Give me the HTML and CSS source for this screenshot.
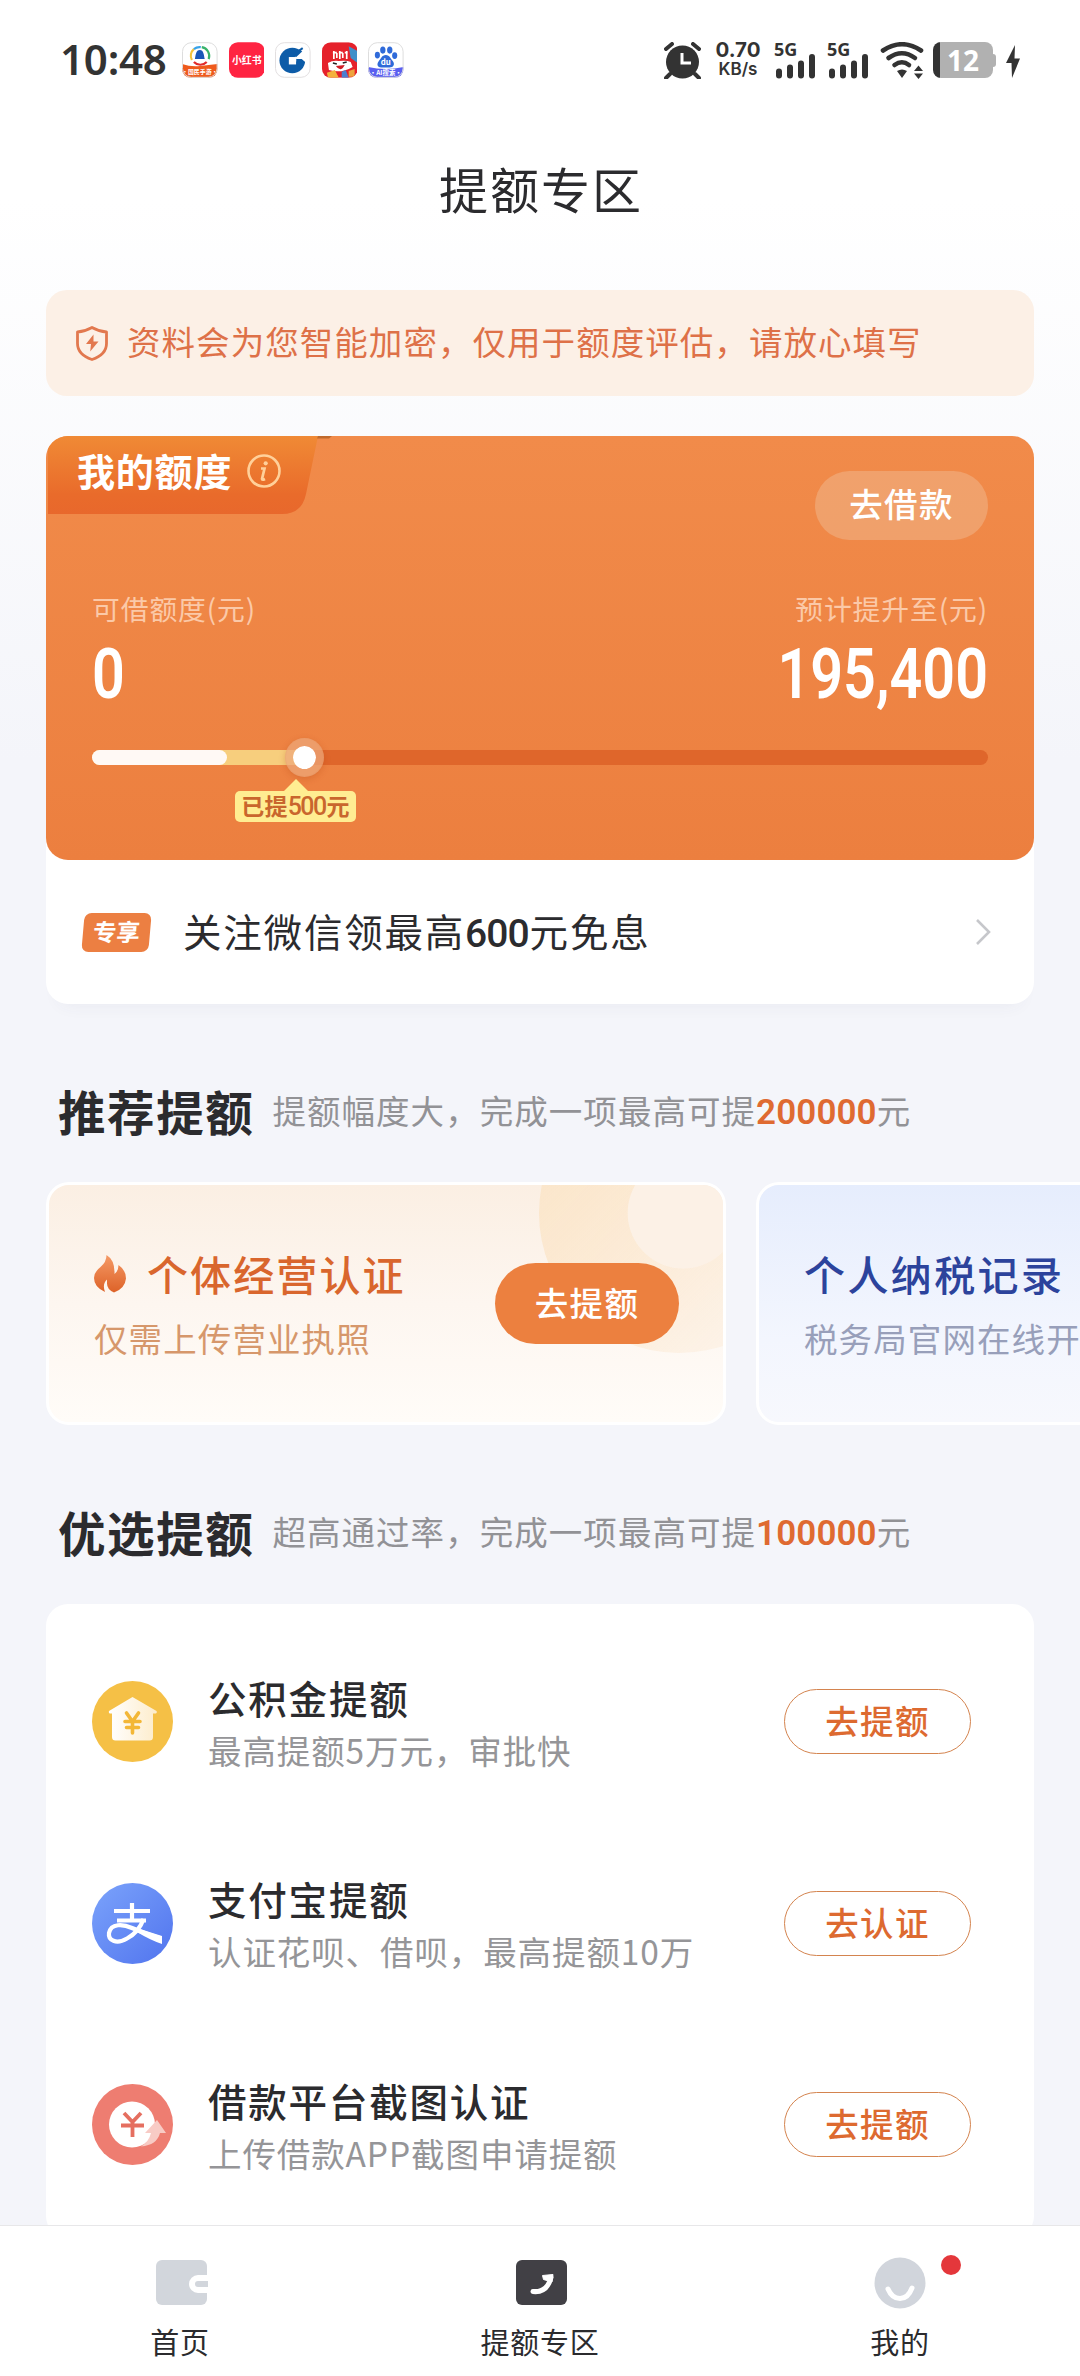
FILE: index.html
```html
<!DOCTYPE html>
<html lang="zh-CN">
<head>
<meta charset="utf-8">
<title>提额专区</title>
<link rel="stylesheet" href="styles.css">
</head>
<body>
<div class="screen">
  <header class="status">
    <span class="clock">10:48</span>
    <div class="apps">
      <svg viewBox="0 0 36 36"><defs><clipPath id="r"><rect width="36" height="36" rx="9"/></clipPath></defs><g clip-path="url(#r)"><rect width="36" height="36" fill="#fff"/><path d="M0 22q9 3 18 2t18-2v14H0z" fill="#ef5a1c"/><g fill="none" stroke-width="2.2"><path d="M10 18a9 9 0 0 1 2-11" stroke="#f5c33a"/><path d="M12 7a9 9 0 0 1 7-2" stroke="#3aa3e8"/><path d="M20 5a9 9 0 0 1 7 12" stroke="#39b36b"/><path d="M12 20a9 9 0 0 0 13 0" stroke="#e22c2c"/></g><path d="M18 8c4 0 4 5 5 9h-10c1-4 1-9 5-9z" fill="#1b57b8"/><text x="18" y="32" class="micro" font-size="6">·国民手游·</text></g><rect x=".5" y=".5" width="35" height="35" rx="9" fill="none" stroke="#ddd"/></svg>
      <svg viewBox="0 0 36 36"><rect width="36" height="36" rx="9" fill="#ff2442"/><text x="18" y="22" class="micro" font-size="10">小红书</text></svg>
      <svg viewBox="0 0 36 36"><rect x=".5" y=".5" width="35" height="35" rx="9" fill="#fff" stroke="#e2dfe0"/><circle cx="17.500" cy="18.500" r="13" fill="#0d5ca8"/><rect x="14" y="15" width="7.500" height="7.500" fill="#fff"/><path d="M20 14l9-8 5 5v12l-7-6-5.500 0z" fill="#fff"/><path d="M18 14l7-6.500 2.500 2L21.500 15z" fill="#0d5ca8"/><path d="M21.500 19.500h8l-5 6-3-3z" fill="#0d5ca8"/><path d="M19 12.500l9-6.500" stroke="#0d5ca8" stroke-width="2"/></svg>
      <svg viewBox="0 0 36 36"><g clip-path="url(#r)"><rect width="36" height="36" fill="#e5212b"/><path d="M27 4l9 5v12l-7-5z" fill="#3f8fc9"/><path d="M11 10.500h4M17 10.500h4M23 10.500h3M12 9v8M15 11v5M18 9v8M21 11v5M25 9v8" stroke="#fff" stroke-width="1.700"/><path d="M6 21q5-3 11-2 8-1 12 1l2 5q-12 7-24 3z" fill="#fff"/><path d="M14 24q5 7 9-1z" fill="#cf1c25"/><path d="M11 21l4 1M21 21l4-1" stroke="#222" stroke-width="1.500"/><path d="M5 31l8-3 4 8H6z" fill="#f4b13d"/><path d="M20 30l4-2 3 8h-7z" fill="#4b7fd0"/><path d="M27 29l6-2v8h-6z" fill="#eda43e"/></g></svg>
      <svg viewBox="0 0 36 36"><g clip-path="url(#r)"><rect width="36" height="36" fill="#fff"/><path d="M0 25q18 4 36 0v11H0z" fill="#5a5ff0"/></g><rect x=".5" y=".5" width="35" height="35" rx="9" fill="none" stroke="#ddd"/><g fill="#2f6ad9"><ellipse cx="9.500" cy="13" rx="2.600" ry="3.400"/><ellipse cx="15" cy="8" rx="2.700" ry="3.600"/><ellipse cx="22" cy="8" rx="2.700" ry="3.600"/><ellipse cx="27" cy="13.500" rx="2.600" ry="3.400"/><path d="M18 13c4 0 5 4 7 6 3 4 0 7-4 6.500h-7c-4 .5-6-3-3-6.500 2-2 3-6 7-6z"/></g><text x="18" y="23.500" class="micro" font-size="8">du</text><text x="18" y="33" class="micro" font-size="6.500">·AI搜索·</text></svg>
    </div>
    <svg class="alarm" viewBox="0 0 37 37"><path d="M2 7l6-5M35 7l-6-5M6 32l-4 4M31 32l4 4" stroke="#333" stroke-width="4" stroke-linecap="round"/><circle cx="18.500" cy="20" r="16.500" fill="#333"/><path d="M18 11v10h9" fill="none" stroke="#fff" stroke-width="3"/></svg>
    <div class="speed"><b>0.70</b><i>KB/s</i></div>
    <div class="signal"><span>5G</span><svg viewBox="0 0 42 26"><path d="M5 18.500v4M16 14.500v8M27 10.500v12M38 4v18.500" /></svg></div>
    <div class="signal"><span>5G</span><svg viewBox="0 0 42 26"><path d="M5 18.500v4M16 14.500v8M27 10.500v12M38 4v18.500" /></svg></div>
    <svg class="wifi" viewBox="0 0 44 37"><g fill="none" stroke="#333" stroke-width="4.600" stroke-linecap="round"><path d="M3 8.500Q22 -4 41 8.500"/><path d="M8.500 16Q22 6.500 35 16"/><path d="M14.500 23Q22 17.500 29 23"/></g><path d="M17 29q5-3 10 0l-5 7zM34 29l4.500-5.500 4.500 5.500zM34 31.500h9L38.500 37z" fill="#333"/></svg>
    <div class="battery"><span>12</span></div>
    <svg class="bolt" viewBox="0 0 14 33"><path d="M9 0L0 18h5.500L6 33l8-19.500H8.500z" fill="#333"/></svg>
  </header>

  <h1 class="title">提额专区</h1>

  <main class="content">
    <div class="notice">
      <svg viewBox="0 0 32 35"><path d="M16 1.500Q23 5.500 30.500 6v11.500Q30.500 28.500 16 33.500 1.500 28.500 1.500 17.500V6Q9 5.500 16 1.500z" fill="none" stroke="#e2784e" stroke-width="2.800" stroke-linejoin="round"/><path d="M17.500 8.500l-7.500 9.500h5l-.8 7.500L22.500 15.500h-5z" fill="#e2784e"/></svg>
      <span>资料会为您智能加密，仅用于额度评估，请放心填写</span>
    </div>

    <section class="quota">
      <div class="quota-card">
        <div class="quota-tab">
          <svg class="tab-bg" viewBox="0 0 290 78"><defs><linearGradient id="tg" x2="0" y2="1"><stop offset="0" stop-color="#f08a35"/><stop offset=".75" stop-color="#e96b2b"/><stop offset="1" stop-color="#e8682c"/></linearGradient></defs><path d="M0 0H272L260 58Q256 78 236 78H2V0z" fill="url(#tg)"/><path d="M272 0h14l-3 2.500h-12z" fill="#c06a2c"/></svg>
          <span>我的额度</span>
          <svg class="info" viewBox="0 0 34 34"><circle cx="17" cy="17" r="15.500" fill="none" stroke="#ffd09a" stroke-width="2.600"/><circle cx="18.700" cy="9.300" r="2.100" fill="#ffd09a"/><path d="M14 14.500h3.500l-2.500 10.500q0 1.500 3 0" fill="none" stroke="#ffd09a" stroke-width="2.700"/></svg>
        </div>
        <a class="loan">去借款</a>
        <div class="amounts">
          <div><p>可借额度(元)</p><b>0</b></div>
          <div class="right"><p>预计提升至(元)</p><b>195,400</b></div>
        </div>
        <div class="track"><div class="gain"></div><div class="base"></div><div class="knob"></div><div class="tip">已提<span>500</span>元</div></div>
      </div>
      <div class="follow">
        <span class="tag">专享</span>
        <span class="follow-text">关注微信领最高<span class="num">600</span>元免息</span>
        <svg viewBox="0 0 16 28"><path d="M2 2l12 12L2 26" fill="none" stroke="#c6c7cb" stroke-width="2.600"/></svg>
      </div>
    </section>

    <div class="heading"><h2>推荐提额</h2><p>提额幅度大，完成一项最高可提<b>200000</b>元</p></div>
    <div class="offers">
      <article class="offer warm">
        <div>
          <h3><svg viewBox="0 0 32 38"><defs><linearGradient id="fg" x2="0" y2="1"><stop offset="0" stop-color="#f59a66"/><stop offset="1" stop-color="#dd6228"/></linearGradient></defs><path d="M12.500 0Q21 5 20.500 19 24.500 16 24.500 10 32 15 32 23.500 31 33.500 20 37.500 13 34.500 13 28.500V24.500Q8 29 11 37 0 32 0 23 0 17 6.500 12 12.500 7 12.500 0z" fill="url(#fg)"/></svg>个体经营认证</h3>
          <p>仅需上传营业执照</p>
        </div>
        <a>去提额</a>
      </article>
      <article class="offer cool">
        <div><h3>个人纳税记录</h3><p>税务局官网在线开</p></div>
      </article>
    </div>

    <div class="heading second"><h2>优选提额</h2><p>超高通过率，完成一项最高可提<b>100000</b>元</p></div>
    <ul class="list">
      <li>
        <svg viewBox="0 0 81 81"><defs><linearGradient id="hg"><stop offset="0" stop-color="#fff"/><stop offset="1" stop-color="#fdeccb"/></linearGradient></defs><circle cx="40.500" cy="40.500" r="40.500" fill="#f5c046"/><path d="M40.500 16L17 30q-1 3 3 2.500V56q0 3.500 3.500 3.500h34Q61 59.500 61 56V32.500q5 .5 3.500-2.500z" fill="url(#hg)"/><path d="M34.500 32l6 8.500 6-8.500M33 40.500h15M34.500 46.500h12M40.500 40.500V52" fill="none" stroke="#f3b737" stroke-width="3.600" stroke-linecap="round"/></svg>
        <div><h4>公积金提额</h4><p>最高提额5万元，审批快</p></div>
        <a>去提额</a>
      </li>
      <li>
        <svg viewBox="0 0 81 81"><defs><linearGradient id="bg" x2="1" y2="1"><stop offset="0" stop-color="#7ba3fb"/><stop offset="1" stop-color="#5174ee"/></linearGradient></defs><circle cx="40.500" cy="40.500" r="40.500" fill="url(#bg)"/><path d="M22 28h36M40 20v18M25 37.500h29" fill="none" stroke="#fff" stroke-width="4.200"/><path d="M51.500 36Q47 49 35 55.500C24 62 16 57 17 50 19 40 31 41 40 45Q54 51 69 55.500" fill="none" stroke="#fff" stroke-width="4.200"/><path d="M48 46l22 7v8Q58 57 45 49z" fill="#fff"/></svg>
        <div><h4>支付宝提额</h4><p>认证花呗、借呗，最高提额10万</p></div>
        <a>去认证</a>
      </li>
      <li>
        <svg viewBox="0 0 81 81"><circle cx="40.500" cy="40.500" r="40.500" fill="#ee7d71"/><circle cx="40" cy="40.500" r="23" fill="#fff"/><path d="M32 29l8.500 9 8.500-9M29 41.500h23M40.500 38v15" fill="none" stroke="#e56f60" stroke-width="3.800"/><path d="M65 36l9 13h-6Q65 61 49 62.500q8-5 10-13.500h-6z" fill="#f8cbc5"/></svg>
        <div><h4>借款平台截图认证</h4><p>上传借款APP截图申请提额</p></div>
        <a>去提额</a>
      </li>
    </ul>
  </main>

  <nav class="tabs">
    <a><svg viewBox="-2 0 52 52"><rect x="0" y="3" width="51" height="45" rx="6" fill="#d2d6dc"/><path d="M52 27H43" stroke="#d2d6dc" stroke-width="6"/><path d="M52 21H42a6 6 0 0 0 0 12h10" fill="none" stroke="#fff" stroke-width="6"/></svg>首页</a>
    <a><svg viewBox="-2 0 52 52"><rect x="0" y="3" width="51" height="45" rx="6" fill="#414045"/><path d="M17 34.500Q31 36 35 20.500" fill="none" stroke="#fff" stroke-width="5" stroke-linecap="round"/><path d="M26.500 18.500L37 17.500 36 25 27.500 22.500z" fill="#fff" stroke="#fff" stroke-linejoin="round"/></svg>提额专区</a>
    <a class="me"><svg viewBox="0 0 52 52"><circle cx="26" cy="26" r="25.500" fill="#d1d5dc"/><path d="M14 32q4 9.500 12 9.500T38 31" fill="none" stroke="#fff" stroke-width="5" stroke-linecap="round"/></svg>我的</a>
  </nav>
</div>
</body>
</html>
```
FILE: styles.css
```css
* { box-sizing: border-box; margin: 0; padding: 0; }
body {
  width: 1080px; height: 2376px; overflow: hidden;
  font-family: "Noto Sans CJK SC", sans-serif;
  color: #2b2b2e; background: #f4f5fa;
}
svg { display: block; flex: none; }
.screen {
  height: 2376px; display: flex; flex-direction: column; overflow: hidden;
  background: linear-gradient(#fff 200px, #f4f5fa 760px);
}

.status { height: 120px; flex: none; display: flex; align-items: center; padding-left: 60px; color: #333; font-family: "Noto Sans", sans-serif; }
.clock { width: 122px; font-size: 42px; font-weight: 600; line-height: 60px; letter-spacing: -.2px; white-space: nowrap; margin-top: -2px; }
.apps { display: flex; gap: 11px; margin-right: auto; }
.apps svg { width: 35.600px; height: 36px; }
.micro { fill: #fff; text-anchor: middle; font-family: "Noto Sans CJK SC", sans-serif; font-weight: 700; }
.alarm { width: 37px; height: 37px; margin-right: 14px; }
.speed { width: 46px; display: flex; flex-direction: column; align-items: center; margin-right: 13px; font-family: Inter, sans-serif; }
.speed b { font-size: 20.500px; font-weight: 700; line-height: 21px; margin-top: -3px; }
.speed i { font-size: 17px; font-style: normal; font-weight: 600; line-height: 19px; }
.signal { position: relative; width: 42px; height: 37px; display: flex; align-items: flex-end; margin-right: 11px; }
.signal span { position: absolute; top: -3px; left: 0; font-size: 18px; font-weight: 700; line-height: 20px; }
.signal svg { width: 42px; height: 26px; fill: none; stroke: #333; stroke-width: 6; stroke-linecap: round; }
.wifi { width: 44px; height: 37px; margin: 0 9px 0 0; }
.battery { position: relative; width: 60px; height: 36px; border-radius: 8px; background: linear-gradient(90deg, #333 7px, #b1b1b1 7px); display: flex; align-items: center; justify-content: center; color: #fff; font-size: 28px; font-weight: 700; line-height: 36px; margin-right: 13px; }
.battery::after { content: ""; position: absolute; right: -3px; top: 12px; width: 3px; height: 13px; background: #b1b1b1; border-radius: 0 3px 3px 0; }
.bolt { width: 14px; height: 33px; margin: 3px 60px 0 0; }

.title { flex: none; height: 170px; font-size: 49px; font-weight: 400; letter-spacing: 2px; line-height: 136px; text-align: center; padding-left: 2px; }
.content { flex: 1; min-height: 0; overflow: hidden; display: flex; flex-direction: column; padding-left: 46px; }

.notice { flex: none; width: 988px; height: 106px; border-radius: 21px; background: #fcf0e6; display: flex; align-items: center; gap: 19px; padding-left: 30px; color: #de7148; font-size: 33.500px; letter-spacing: 1.050px; }
.notice svg { width: 32px; height: 35px; }
.notice span { line-height: 40px; margin-top: -5px; }

.quota { flex: none; width: 988px; margin-top: 40px; border-radius: 22px; background: #fff; box-shadow: 0 14px 18px -14px rgba(70, 70, 100, .07); }
.quota-card { position: relative; height: 424px; border-radius: 22px; background: linear-gradient(#f18b4a, #ec7f3f); overflow: hidden; color: #fff; }
.quota-tab { position: relative; width: 290px; height: 78px; display: flex; align-items: center; padding: 0 0 8px 31px; gap: 15px; font-size: 38px; font-weight: 700; letter-spacing: .8px; }
.quota-tab span { position: relative; line-height: 60px; margin-top: -2px; }
.tab-bg { position: absolute; left: 0; top: 0; width: 290px; height: 78px; }
.info { position: relative; width: 34px; height: 34px; }
.loan { position: absolute; right: 46px; top: 35px; width: 173px; height: 69px; border-radius: 35px; background: rgba(241, 180, 136, .55); text-align: center; font-size: 33.500px; font-weight: 500; letter-spacing: 1.300px; line-height: 64px; }
.amounts { display: flex; justify-content: space-between; padding: 74px 46px 0 46px; }
.amounts p { font-size: 27.800px; line-height: 40px; letter-spacing: .9px; color: #fbc9a8; }
.amounts b { display: block; font-family: Roboto, sans-serif; font-size: 71px; font-weight: 600; line-height: 84px; transform: translateY(4px) scaleX(.81); transform-origin: 0 50%; }
.amounts .right { text-align: right; }
.amounts .right b { transform-origin: 100% 50%; }
.track { position: relative; width: 896px; height: 15px; margin: 38px 46px 0; border-radius: 8px; background: #df662b; }
.gain { position: absolute; left: 0; top: 0; width: 212px; height: 15px; border-radius: 8px 0 0 8px; background: #f7ce7d; }
.base { position: absolute; left: 0; top: 0; width: 135px; height: 15px; border-radius: 8px; background: #fff9f5; }
.knob { position: absolute; left: 193px; top: -12px; width: 39px; height: 39px; border: 8px solid rgba(237, 167, 122, .72); border-radius: 50%; background: #fff; background-clip: padding-box; box-shadow: 0 2px 6px rgba(170, 60, 10, .25); }
.tip { position: absolute; left: 143px; top: 41px; width: 121px; height: 31px; border-radius: 5px; background: #ffed92; color: #c9662d; font-size: 23px; font-weight: 700; line-height: 29px; text-align: center; letter-spacing: .2px; white-space: nowrap; }
.tip span { font-family: Roboto, sans-serif; font-size: 25px; font-weight: 500; letter-spacing: -1.600px; margin-right: 1px; }
.tip::before { content: ""; position: absolute; left: 49px; top: -12px; border: 12px solid transparent; border-top: 0; border-bottom-color: #ffed92; }

.follow { height: 144px; display: flex; align-items: center; padding: 0 43px 0 37px; font-size: 38.500px; }
.tag { width: 67px; height: 39px; border-radius: 7px; background: #ec7f42; color: #fff; font-size: 23.500px; font-weight: 700; line-height: 36px; text-align: center; transform: skewX(-5deg); }
.follow-text { flex: 1; margin-left: 33px; margin-top: -1px; letter-spacing: 1.800px; line-height: 60px; }
.num { font-family: Roboto, sans-serif; font-size: 39px; font-weight: 500; letter-spacing: -1px; margin-right: 1px; }
.follow svg { width: 16px; height: 28px; }

.heading { flex: none; height: 178px; display: flex; align-items: center; padding: 36px 0 0 12px; }
.heading h2 { font-size: 47.500px; font-weight: 700; letter-spacing: 1.600px; line-height: 70px; margin: -1px 18px 0 0; }
.heading p { font-size: 33.500px; letter-spacing: 1.050px; line-height: 60px; color: #929296; white-space: nowrap; }
.heading b { font-family: Roboto, sans-serif; font-size: 35px; font-weight: 600; letter-spacing: .1px; color: #df6a31; }
.heading.second { height: 179px; }

.offers { flex: none; display: flex; gap: 30px; }
.offer { position: relative; flex: none; width: 680px; height: 243px; border: 3px solid #fff; border-radius: 23px; overflow: hidden; padding: 58px 44px 0 45px; display: flex; justify-content: space-between; }
.offer h3 { display: flex; align-items: center; gap: 21px; font-size: 41px; font-weight: 500; letter-spacing: 2.100px; line-height: 60px; }
.offer h3 svg { width: 32px; height: 38px; margin-top: 1px; }
.offer p { font-size: 33.500px; line-height: 50px; letter-spacing: 1.100px; margin-top: 10px; white-space: nowrap; }
.warm { background: linear-gradient(#fbefe3, #fdf6f0 50%, #fffcf8); }
.warm::before { content: ""; position: absolute; left: 490px; top: -112px; width: 280px; height: 280px; border-radius: 50%; background: radial-gradient(circle at 51.500% 50%, rgba(252, 241, 230, 1) 55px, transparent 56px), linear-gradient(135deg, #fbe6cb 20%, rgba(252, 238, 222, .6) 80%); }
.warm h3 { color: #d9662d; }
.warm p { color: #d6976b; }
.warm > a { position: relative; width: 184px; height: 81px; margin-top: 20px; border-radius: 41px; background: #ec803f; color: #fff; font-size: 33.500px; font-weight: 500; line-height: 77px; letter-spacing: 1.300px; text-align: center; }
.cool { background: linear-gradient(#e6edfd, #f3f6fe 65%, #f7f8fd); }
.cool h3 { color: #2c439c; letter-spacing: 2.400px; }
.cool p { color: #989fba; }

.list { flex: none; width: 988px; height: 634px; list-style: none; border-radius: 22px; background: #fff; padding-top: 17px; }
.list li { height: 201.500px; display: flex; align-items: center; padding: 0 63px 0 46px; }
.list li > svg { width: 81px; height: 81px; }
.list div { flex: 1; margin-left: 35px; }
.list h4 { font-size: 38.500px; font-weight: 500; line-height: 56px; letter-spacing: 1.800px; }
.list p { font-size: 33.500px; line-height: 50px; letter-spacing: .9px; color: #959598; }
.list a { width: 187px; height: 65px; border: 1.500px solid #d4844f; border-radius: 33px; color: #dd6a30; font-size: 33.500px; font-weight: 500; letter-spacing: 1.300px; line-height: 59px; text-align: center; }

.tabs { flex: none; height: 151px; border-top: 1px solid #e7e7e9; background: #fff; display: grid; grid-template-columns: repeat(3, 1fr); }
.tabs a { position: relative; display: flex; flex-direction: column; align-items: center; padding-top: 31px; font-size: 29px; letter-spacing: .8px; line-height: 64px; white-space: nowrap; }
.tabs svg { width: 52px; height: 52px; overflow: visible; }
.me::after { content: ""; position: absolute; left: 221px; top: 29px; width: 20px; height: 20px; border-radius: 50%; background: #e4373b; }
```
